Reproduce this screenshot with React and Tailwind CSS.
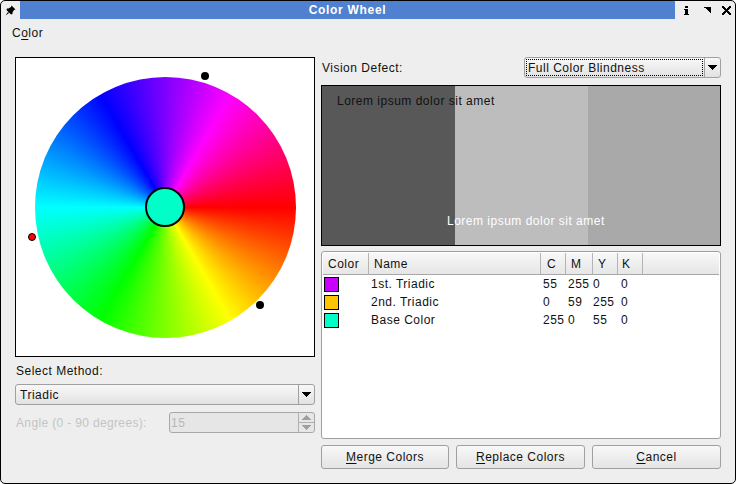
import React from "react";

function Arrow({ color = "#000" }) {
    return (
        <svg width="9" height="5" viewBox="0 0 9 5" shapeRendering="crispEdges">
            <path d="M0 0h9v1h-1v1h-1v1h-1v1h-1v1h-1v-1h-1v-1h-1v-1h-1v-1h-1z" fill={color} />
        </svg>
    );
}

function Combo({ text, className, focus }) {
    return (
        <div className={"flex h-[21px] rounded-[3px] border border-[#a0a0a0] bg-gradient-to-b from-[#f8f8f8] to-[#e2e2e2] " + className}>
            <div className="flex-1 min-w-0 p-[1px]">
                <div className={focus ? "h-full pl-[1px] border border-dotted border-black leading-[17px]" : "h-full pl-[3px] leading-[19px]"}>{text}</div>
            </div>
            <div className="w-[16px] flex items-center justify-center border-l border-[#a0a0a0]">
                <Arrow />
            </div>
        </div>
    );
}

function Btn({ u, rest, className }) {
    return (
        <button className={"h-[24px] rounded-[3px] border border-[#a0a0a0] bg-gradient-to-b from-[#f8f8f8] to-[#e4e4e4] text-center " + className}>
            <span className="underline underline-offset-2">{u}</span>{rest}
        </button>
    );
}

const columns = [
    { name: "Color", w: "w-[46px]", pl: "pl-[5px]" },
    { name: "Name", w: "w-[172px]", pl: "pl-[5px]" },
    { name: "C", w: "w-[25px]", pl: "pl-[6px]" },
    { name: "M", w: "w-[27px]", pl: "pl-[5px]" },
    { name: "Y", w: "w-[25px]", pl: "pl-[5px]" },
    { name: "K", w: "w-[25px]", pl: "pl-[4px]" },
];

const rows = [
    { swatch: "bg-[#c800ff]", name: "1st. Triadic", c: "55", m: "255", y: "0", k: "0" },
    { swatch: "bg-[#ffc400]", name: "2nd. Triadic", c: "0", m: "59", y: "255", k: "0" },
    { swatch: "bg-[#00ffc8]", name: "Base Color", c: "255", m: "0", y: "55", k: "0" },
];

export default function App() {
    return (
        <div className="w-[736px] h-[484px] bg-white overflow-hidden">
            <div className="w-full h-full flex flex-col rounded-[5px] border border-black bg-[#eeeeee] overflow-hidden text-[12px] tracking-[0.5px] text-[#111] font-['Liberation_Sans',sans-serif]">
                <div className="h-[18px] flex shrink-0">
                    <div className="w-[19px] flex items-center justify-center">
                        <svg width="11" height="11" viewBox="0 0 11 11">
                            <path d="M6.5 0.5 L10.5 4.5 L9 5 L7.5 7.5 L7.5 9 L6 9.5 L1.5 5 L2 3.5 L3.5 3.5 L6 2 Z M3 7 L0.5 10.5 L4 8 Z" fill="#000" />
                        </svg>
                    </div>
                    <div className="flex-1 bg-[#5080d0] text-white font-bold tracking-[0.7px] text-center leading-[18px]">Color Wheel</div>
                    <div className="w-[60px] flex items-center pl-[9px]">
                        <svg width="5" height="9" viewBox="0 0 5 9" shapeRendering="crispEdges">
                            <path d="M1 0h3v2h-3z M0 3h4v5h1v1h-5v-1h1v-4h-1z" fill="#000" />
                        </svg>
                        <svg className="ml-[15px]" width="7" height="6" viewBox="0 0 7 6" shapeRendering="crispEdges">
                            <path d="M0 0h7v6h-1v-1h-1v-1h-1v-1h-1v-1h-1v-1h-2z" fill="#000" />
                        </svg>
                        <svg className="ml-[11px]" width="9" height="9" viewBox="0 0 9 9" shapeRendering="crispEdges">
                            <path d="M0 0h2v1h1v1h1v1h1v-1h1v-1h1v-1h2v2h-1v1h-1v1h-1v1h1v1h1v1h1v2h-2v-1h-1v-1h-1v-1h-1v1h-1v1h-1v1h-2v-2h1v-1h1v-1h1v-1h-1v-1h-1v-1h-1z" fill="#000" />
                        </svg>
                    </div>
                </div>
                <div className="h-[38px] pl-[11px] pt-[6px] leading-[16px] shrink-0">
                    C<span className="underline underline-offset-2">o</span>lor
                </div>
                <div className="flex flex-1 pl-[14px] pr-[14px] gap-[6px]">
                    <div className="w-[300px] flex flex-col">
                        <div className="relative w-[300px] h-[300px] bg-white border border-black flex items-center justify-center">
                            <div className="w-[261px] h-[261px] rounded-full flex items-center justify-center bg-[conic-gradient(from_90deg,#f00,#ff0,#0f0,#0ff,#00f,#f0f,#f00)]">
                                <div className="w-[40px] h-[40px] rounded-full bg-[#00ffc8] border-2 border-black"></div>
                            </div>
                            <div className="absolute left-[185px] top-[14px] w-[8px] h-[8px] rounded-full bg-black"></div>
                            <div className="absolute left-[240px] top-[243px] w-[8px] h-[8px] rounded-full bg-black"></div>
                            <div className="absolute left-[12px] top-[175px] w-[8px] h-[8px] rounded-full bg-[#ff0000] border border-black"></div>
                        </div>
                        <div className="mt-[6px] pl-[1px] h-[16px] leading-[16px]">Select Method:</div>
                        <Combo text="Triadic" className="mt-[5px] w-[300px]" />
                        <div className="mt-[7px] flex items-center justify-between text-[#c4c4c4]">
                            <span className="pl-[1px] pt-[1px] tracking-[0.35px]">Angle (0 - 90 degrees):</span>
                            <div className="w-[146px] h-[21px] flex rounded-[3px] border border-[#a8a8a8] bg-[#e6e6e6]">
                                <div className="flex-1 pl-[1px] leading-[21px] text-[#b8b8b8]">15</div>
                                <div className="w-[16px] flex flex-col border-l border-[#b0b0b0]">
                                    <div className="flex-1 flex items-center justify-center border-b border-[#b0b0b0]">
                                        <svg width="9" height="5" viewBox="0 0 9 5" shapeRendering="crispEdges">
                                            <path d="M4 0h1v1h1v1h1v1h1v1h1v1h-9v-1h1v-1h1v-1h1v-1h1z" fill="#a0a0a0" />
                                        </svg>
                                    </div>
                                    <div className="flex-1 flex items-center justify-center">
                                        <Arrow color="#a0a0a0" />
                                    </div>
                                </div>
                            </div>
                        </div>
                    </div>
                    <div className="w-[400px] flex flex-col">
                        <div className="h-[21px] flex items-center justify-between">
                            <span className="pl-[1px]">Vision Defect:</span>
                            <Combo text="Full Color Blindness" className="w-[197px]" focus />
                        </div>
                        <div className="relative mt-[7px] h-[161px] flex border border-black">
                            <div className="w-[133px] bg-[#585858]"></div>
                            <div className="w-[133px] bg-[#bdbdbd]"></div>
                            <div className="flex-1 bg-[#a9a9a9]"></div>
                            <span className="absolute left-[15px] top-[6px] text-[#111]">Lorem ipsum dolor sit amet</span>
                            <span className="absolute left-[125px] top-[126px] text-white">Lorem ipsum dolor sit amet</span>
                        </div>
                        <div className="mt-[5px] h-[188px] rounded-[3px] border border-[#a0a0a0] bg-white p-[1px]">
                            <div className="flex h-[22px] bg-gradient-to-b from-[#f8f8f8] to-[#e6e6e6] border-b border-[#a8a8a8]">
                                {columns.map((c) => (
                                    <div key={c.name} className={c.w + " " + c.pl + " border-r border-[#b4b4b4] leading-[22px]"}>{c.name}</div>
                                ))}
                            </div>
                            {rows.map((r) => (
                                <div key={r.name} className="flex h-[18px] items-center leading-[18px]">
                                    <div className="w-[46px] pl-[1px]">
                                        <div className={"w-[15px] h-[15px] border border-black " + r.swatch}></div>
                                    </div>
                                    <div className="w-[172px] pl-[2px]">{r.name}</div>
                                    <div className="w-[25px] pl-[2px]">{r.c}</div>
                                    <div className="w-[27px] pl-[2px]">{r.m}</div>
                                    <div className="w-[25px]">{r.y}</div>
                                    <div className="w-[25px] pl-[3px]">{r.k}</div>
                                </div>
                            ))}
                        </div>
                        <div className="mt-[6px] flex gap-[7px]">
                            <Btn u="M" rest="erge Colors" className="w-[128px]" />
                            <Btn u="R" rest="eplace Colors" className="w-[129px]" />
                            <Btn u="C" rest="ancel" className="w-[129px]" />
                        </div>
                    </div>
                </div>
            </div>
        </div>
    );
}
